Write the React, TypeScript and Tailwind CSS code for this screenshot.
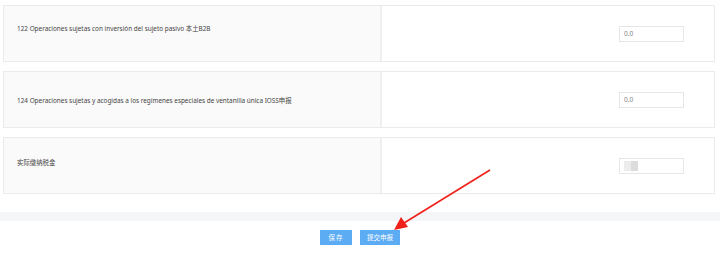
import React from 'react';

const ROWS = [
  { label: '122 Operaciones sujetas con inversión del sujeto pasivo 本土B2B', labelTop: 'pt-[19px]', value: '0.0' },
  { label: '124 Operaciones sujetas y acogidas a los regímenes especiales de ventanilla única IOSS申报', labelTop: 'pt-[25px]', value: '0.0' },
  { label: '实际缴纳税金', labelTop: 'pt-[21px]', value: null },
];

function FieldRow({ label, labelTop, value }: { label: string; labelTop: string; value: string | null }) {
  return (
    <div className="flex h-[57px] border border-[#ebebeb] bg-white">
      <div className={`w-[378px] shrink-0 bg-[#fafafa] border-r-2 border-[#efefef] pl-[13px] ${labelTop}`}>
        <p className="text-[6.4px] leading-[8px] text-[#444] whitespace-nowrap">{label}</p>
      </div>
      <div className="flex-1 flex justify-end pr-[30px] pt-[20px]">
        <div className="relative w-[65px] h-[16px] border border-[#e6e6e6] bg-white flex items-center pl-[4px]">
          {value !== null ? (
            <span className="text-[6.5px] text-[#888]">{value}</span>
          ) : (
            // blurred value in the screenshot
            <div className="flex blur-[0.6px]">
              <div className="w-[7px] h-[10px] bg-[#ececec]" />
              <div className="w-[7px] h-[10px] bg-[#dcdcdc]" />
            </div>
          )}
        </div>
      </div>
    </div>
  );
}

export default function App() {
  return (
    <div className="relative w-[720px] h-[256px] bg-white overflow-hidden" style={{ fontFamily: '"Noto Sans", "Noto Sans CJK SC", sans-serif' }}>
      <div className="pt-[5px] pl-[3px] pr-[5px] flex flex-col gap-[9px]">
        {ROWS.map((r) => (
          <FieldRow key={r.label} {...r} />
        ))}
      </div>

      <div className="mt-[18px] h-[9px] bg-[#f5f6f8]" />

      <div className="flex justify-center gap-[8px] pt-[9px]">
        <button className="w-[32px] h-[15px] bg-[#5cacf4] text-white text-[6.5px] tracking-[1px] flex items-center justify-center">保存</button>
        <button className="w-[40px] h-[15px] bg-[#5cacf4] text-white text-[6.5px] flex items-center justify-center">提交申报</button>
      </div>

      {/* red annotation arrow */}
      <svg className="absolute left-0 top-0 pointer-events-none" width="720" height="256">
        <line x1="490" y1="170" x2="404" y2="223" stroke="#f0201a" strokeWidth="1.6" />
        <polygon points="394,230 401,217 408,227" fill="#f0201a" />
      </svg>
    </div>
  );
}
